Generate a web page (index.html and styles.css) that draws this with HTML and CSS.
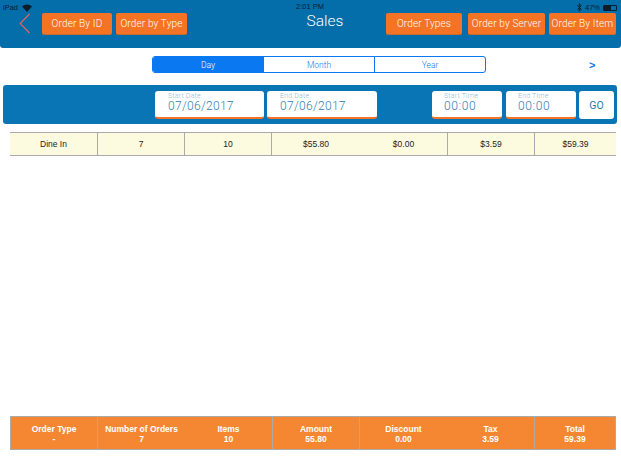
FILE: index.html
```html
<!DOCTYPE html>
<html lang="en">
<head>
  <meta charset="UTF-8" />
  <title>Sales</title>
  <link rel="stylesheet" href="styles.css">
</head>
<body>

<!-- top bar -->
<header class="topBar">
  <div class="statusRow">
    <span class="statusLeft">
      iPad
      <svg class="wifi" width="10" height="8" viewBox="0 0 10 8"><path d="M0 2.6a7 7 0 0 1 10 0L5 8z" fill="#0c1c28"/></svg>
    </span>
    <span class="statusTime">2:01 PM</span>
    <span class="statusRight">
      <svg width="5" height="9" viewBox="0 0 5 9"><path d="M0.3 2.2L4.2 6.2 2.3 8.3V0.7L4.2 2.8 0.3 6.8" fill="none" stroke="#0c1c28" stroke-width="0.9"/></svg>
      47%
      <span class="battery"><span class="batteryFill"></span></span>
    </span>
  </div>
  <div class="navRow">
    <svg class="backArrow" width="12" height="21" viewBox="0 0 12 21"><path d="M10.5 1L1.2 10.5 10.5 20" fill="none" stroke="#e8645a" stroke-width="1.1"/></svg>
    <button class="navBtn w70">Order By ID</button>
    <button class="navBtn w71">Order by Type</button>
    <div class="title">Sales</div>
    <button class="navBtn w76">Order Types</button>
    <button class="navBtn w77">Order by Server</button>
    <button class="navBtn w67">Order By Item</button>
  </div>
</header>

<!-- day / month / year -->
<div class="periodRow">
  <div class="segment">
    <div class="segItem active">Day</div>
    <div class="segItem">Month</div>
    <div class="segItem">Year</div>
  </div>
  <div class="nextBtn">&gt;</div>
</div>

<!-- date filter -->
<div class="filterBar">
  <div class="field startDate"><label>Start Date</label><div class="value">07/06/2017</div></div>
  <div class="field endDate"><label>End Date</label><div class="value">07/06/2017</div></div>
  <div class="field timeField firstTime"><label>Start Time</label><div class="value">00:00</div></div>
  <div class="field timeField"><label>End Time</label><div class="value">00:00</div></div>
  <button class="goBtn">GO</button>
</div>

<div class="dataRow">
  <div class="cell">Dine In</div>
  <div class="cell">7</div>
  <div class="cell">10</div>
  <div class="cell noLine">$55.80</div>
  <div class="cell">$0.00</div>
  <div class="cell">$3.59</div>
  <div class="cell noLine">$59.39</div>
</div>

<div class="spacer"></div>

<div class="totalRow">
  <div class="total"><b>Order Type</b><b>-</b></div>
  <div class="total noLine"><b>Number of Orders</b><b>7</b></div>
  <div class="total"><b>Items</b><b>10</b></div>
  <div class="total"><b>Amount</b><b>55.80</b></div>
  <div class="total noLine"><b>Discount</b><b>0.00</b></div>
  <div class="total"><b>Tax</b><b>3.59</b></div>
  <div class="total noLine"><b>Total</b><b>59.39</b></div>
</div>

</body>
</html>
```

FILE: styles.css
```css
* { box-sizing: border-box; }

html, body {
  height: 465px;
}

body {
  margin: 0;
  font-family: "Liberation Sans", Arial, sans-serif;
  background: white;
  color: #222;
  display: flex;
  flex-direction: column;
  overflow: hidden;
}

.topBar {
  height: 48px;
  background: #046eab;
  border-radius: 0 0 3px 3px;
}

.statusRow {
  height: 13px;
  padding: 2px 4px 0 3px;
  display: grid;
  grid-template-columns: 1fr auto 1fr;
  font-size: 7.5px;
  line-height: 9px;
  color: #0c1c28;
}

.statusLeft {
  display: flex;
  align-items: center;
  gap: 4px;
}

.statusRight {
  display: flex;
  align-items: center;
  justify-content: flex-end;
  gap: 3px;
}

.battery {
  width: 14px;
  height: 6px;
  border: 1px solid #0c1c28;
  border-radius: 1px;
}

.batteryFill {
  display: block;
  width: 7px;
  height: 4px;
  background: #0c1c28;
}

.navRow {
  height: 21px;
  display: flex;
  align-items: center;
  padding: 0 5px 0 19px;
}

.backArrow {
  margin-right: 11px;
}

.navBtn {
  height: 21px;
  padding: 0;
  border: none;
  border-radius: 2px;
  background: #f57325;
  box-shadow: 0 1px 0 #c9692f;
  color: white;
  font-family: Roboto, sans-serif;
  font-weight: 300;
  font-size: 10px;
  letter-spacing: 0.15px;
}

.w70 { width: 70px; margin-right: 4px; }
.w71 { width: 71px; }
.w76 { width: 76px; margin-right: 6px; }
.w77 { width: 77px; margin-right: 4px; }
.w67 { width: 67px; }

.title {
  flex: 1;
  padding: 0 0 6px 77px;
  text-align: center;
  color: white;
  font-family: Roboto, sans-serif;
  font-weight: 300;
  font-size: 15.5px;
}

.periodRow {
  height: 17px;
  margin-top: 8px;
  padding-left: 152px;
  display: flex;
  align-items: center;
}

.segment {
  width: 334px;
  height: 17px;
  display: flex;
  border: 1px solid #0a78f0;
  border-radius: 3px;
  overflow: hidden;
}

.segItem {
  flex: 1;
  font-family: Roboto, sans-serif;
  font-weight: 300;
  font-size: 8.5px;
  line-height: 16px;
  text-align: center;
  color: #0a78f0;
  border-left: 1px solid #0a78f0;
}

.segItem.active {
  background: #0a78f0;
  color: white;
  border-left: none;
}

.nextBtn {
  margin-left: 103px;
  color: #0a78f0;
  font-size: 11px;
  font-weight: bold;
}

.filterBar {
  height: 39px;
  margin: 12px 4px 0 3px;
  padding: 6px 3px 5px 152px;
  display: flex;
  background: #0a75b5;
  border-radius: 3px;
}

.field {
  height: 28px;
  padding: 1px 0 0 13px;
  background: white;
  border-radius: 3px;
  border-bottom: 2px solid #f57325;
  color: #2f80b4;
  font-family: Roboto, sans-serif;
  font-weight: 300;
}

.field label {
  display: block;
  font-size: 7px;
  line-height: 8px;
  color: #8fbcd8;
  letter-spacing: 0.2px;
}

.field .value {
  font-size: 12px;
  line-height: 13px;
  letter-spacing: 0.3px;
}

.startDate {
  width: 109px;
  margin-right: 3px;
}

.endDate {
  width: 110px;
}

.timeField {
  width: 70px;
  padding-left: 12px;
}

.timeField .value {
  letter-spacing: 0.6px;
}

.firstTime {
  margin-left: 55px;
  margin-right: 4px;
}

.goBtn {
  width: 35px;
  height: 28px;
  margin-left: 3px;
  padding: 0;
  border: none;
  border-radius: 3px;
  background: white;
  color: #1f78b0;
  font-family: Roboto, sans-serif;
  font-size: 10.5px;
}

.dataRow {
  height: 24px;
  margin: 8px 5px 0 10px;
  display: grid;
  grid-template-columns: 88px 87px 87px 88px 88px 87px 1fr;
  background: #fcfbe0;
  border-top: 1px solid #aaa;
  border-bottom: 1px solid #aaa;
}

.cell {
  font-size: 8.5px;
  line-height: 22px;
  text-align: center;
  border-right: 1px solid #aaa;
}

.spacer {
  flex: 1;
}

.totalRow {
  height: 34px;
  margin: 0 5px 15px 10px;
  display: grid;
  grid-template-columns: 87px 87px 88px 87px 87px 88px 1fr;
  background: #f58733;
  border: 1px solid #aaa;
}

.total {
  padding-top: 7px;
  text-align: center;
  color: white;
  font-size: 8.5px;
  line-height: 10px;
  border-right: 1px solid #aaa;
}

.total b {
  display: block;
}

.noLine {
  border-right: none;
}
```
